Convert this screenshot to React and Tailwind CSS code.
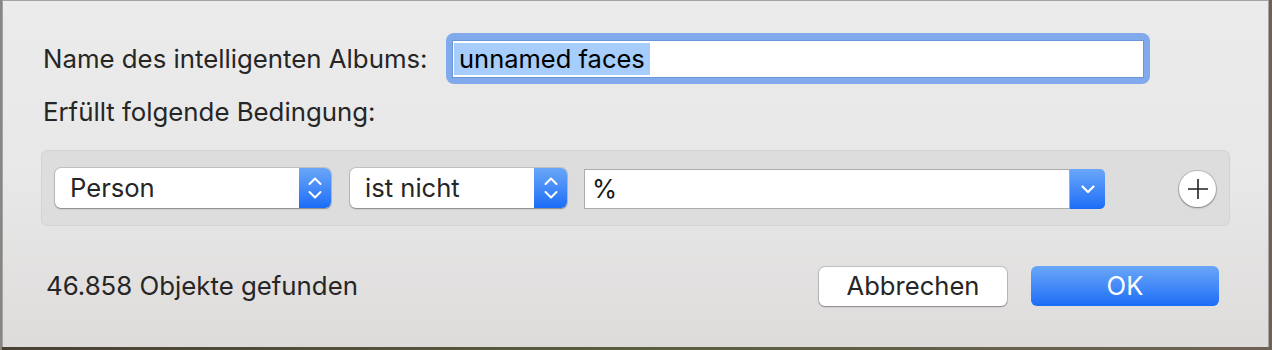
import React from "react";

const font = { fontFamily: "Inter, 'Liberation Sans', sans-serif" };

function Stepper() {
  return (
    <svg width="16" height="28" viewBox="0 0 16 28" fill="none">
      <path d="M2.5 10 L8 4.5 L13.5 10" stroke="white" strokeWidth="2" strokeLinecap="round" strokeLinejoin="round" />
      <path d="M2.5 18 L8 23.5 L13.5 18" stroke="white" strokeWidth="2" strokeLinecap="round" strokeLinejoin="round" />
    </svg>
  );
}

function ChevronDown() {
  return (
    <svg width="16" height="10" viewBox="0 0 16 10" fill="none">
      <path d="M2.5 2.5 L8 8 L13.5 2.5" stroke="white" strokeWidth="2.2" strokeLinecap="round" strokeLinejoin="round" />
    </svg>
  );
}

function Popup({ label, width, blueWidth }) {
  return (
    <div
      className="flex h-[40px] rounded-[6px] bg-white shadow-[0_0_0_1px_rgba(0,0,0,0.12),0_1px_1.5px_rgba(0,0,0,0.3)] overflow-hidden"
      style={{ width }}
    >
      <div className="flex-1 flex items-center pl-[15px] text-[25.6px] text-[#262626] leading-none">{label}</div>
      <div
        className="h-full flex items-center justify-center bg-gradient-to-b from-[#6aa6f8] to-[#1a6cf7]"
        style={{ width: blueWidth }}
      >
        <Stepper />
      </div>
    </div>
  );
}

export default function App() {
  return (
    <div
      className="w-[1272px] h-[350px] relative overflow-hidden bg-gradient-to-r from-[#4a4036] via-[#5b5e3e] to-[#6e6256]"
      style={font}
    >
      <div className="absolute left-0 top-0 w-[2px] h-[350px] bg-[#8a8580]" />
      <div className="ml-[2px] w-[1267px] h-[347px] border-l border-r border-t border-[#a3a3a3] bg-gradient-to-b from-[#ebebeb] via-[#e8e8e8] to-[#dedcdb] pl-[40px] pr-[38px]">
        {/* Row 1 */}
        <div className="flex items-center mt-[32px] h-[51px]">
          <div className="w-[403px] text-[25.8px] text-[#262626] leading-none">Name des intelligenten Albums:</div>
          <div className="w-[704px] h-[51px] rounded-[8px] bg-[#80aaeb] p-[6px] pt-[7px]">
            <div className="h-full bg-white border border-[#6a96da] flex items-center pl-[1px]">
              <span className="h-[32px] flex items-center px-[5px] bg-[#a6cdfb] text-[25.5px] text-black leading-none">
                unnamed faces
              </span>
            </div>
          </div>
        </div>
        {/* Row 2 */}
        <div className="mt-[13px] h-[30px] flex items-center text-[25.8px] text-[#262626] leading-none">
          Erfüllt folgende Bedingung:
        </div>
        {/* Criteria box */}
        <div className="mt-[23px] -ml-[2px] w-[1189px] h-[76px] rounded-[6px] bg-[#dddddd] border border-[#d3d3d3] flex items-center pl-[13px]">
          <Popup label="Person" width={276} blueWidth={32} />
          <div className="w-[19px]" />
          <Popup label="ist nicht" width={217} blueWidth={33} />
          <div className="w-[17px]" />
          <div className="w-[521px] h-[40px] flex mt-[2px]">
            <div className="flex-1 bg-white border border-[#acacac] flex items-center pl-[7px] text-[25.6px] text-[#1a1a1a] leading-none">
              %
            </div>
            <div className="w-[35px] h-full rounded-r-[5px] bg-gradient-to-b from-[#6aa6f8] to-[#1a6cf7] flex items-center justify-center">
              <ChevronDown />
            </div>
          </div>
          <div className="w-[74px]" />
          <div className="w-[37px] h-[36px] rounded-full bg-white shadow-[0_0_0_1px_rgba(0,0,0,0.15),0_1px_2px_rgba(0,0,0,0.35)] flex items-center justify-center mt-[2px]">
            <svg width="22" height="22" viewBox="0 0 22 22">
              <path d="M11 1 V21 M1 11 H21" stroke="#222" strokeWidth="1.6" />
            </svg>
          </div>
        </div>
        {/* Bottom row */}
        <div className="mt-[40px] flex items-center h-[40px]">
          <div className="flex-1 pl-[3px] text-[25.8px] text-[#262626] leading-none">46.858 Objekte gefunden</div>
          <div className="w-[188px] h-[39px] rounded-[6px] bg-white shadow-[0_0_0_1px_rgba(0,0,0,0.14),0_1px_1.5px_rgba(0,0,0,0.3)] flex items-center justify-center text-[25.6px] text-[#262626] leading-none">
            Abbrechen
          </div>
          <div className="w-[24px]" />
          <div className="w-[188px] h-[40px] rounded-[6px] bg-gradient-to-b from-[#6aa6f8] to-[#1a6cf7] flex items-center justify-center text-[25.6px] text-white leading-none mr-[11px]">
            OK
          </div>
        </div>
      </div>
    </div>
  );
}
